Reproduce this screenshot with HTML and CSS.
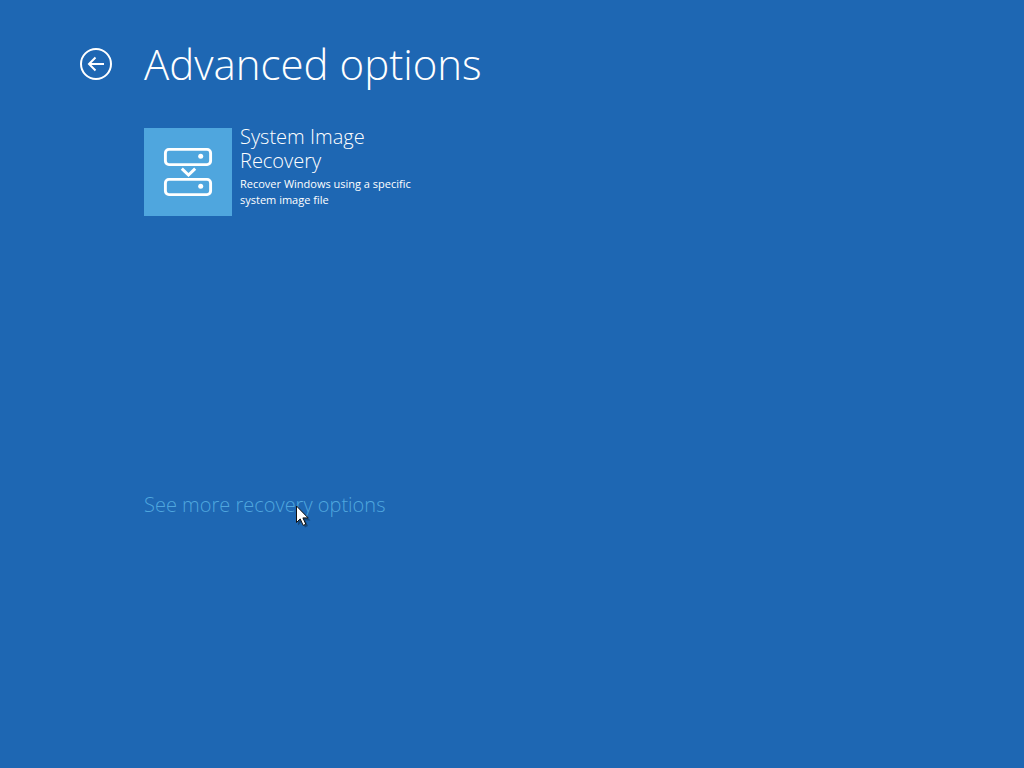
FILE: index.html
```html
<!DOCTYPE html>
<html lang="en">

<head>
    <meta charset="UTF-8">
    <meta name="viewport" content="width=device-width, initial-scale=1.0">
    <title>Advanced options</title>
    <link rel="stylesheet" href="styles.css">
</head>

<body>
    <header class="header">
        <button class="back" type="button" aria-label="Back">
            <svg viewBox="0 0 32 32" width="32" height="32" fill="none" stroke="currentColor" stroke-width="2">
                <circle cx="16" cy="16" r="15" />
                <path d="M24 16H9M15.500 9.500L9 16l6.500 6.500" />
            </svg>
        </button>
        <h1 class="title">Advanced options</h1>
    </header>

    <main class="content">
        <div class="options">
            <button class="option" type="button">
                <span class="option-icon">
                    <svg viewBox="0 0 88 88" width="88" height="88" fill="none" stroke="currentColor">
                        <rect x="21.400" y="21.400" width="45.200" height="15.200" rx="3.500" stroke-width="2.900" />
                        <rect x="21.400" y="51.400" width="45.200" height="15.200" rx="3.500" stroke-width="2.900" />
                        <circle cx="56.700" cy="28.300" r="2.500" fill="currentColor" stroke="none" />
                        <circle cx="56.700" cy="58.300" r="2.500" fill="currentColor" stroke="none" />
                        <path d="M37.800 40.600L44.500 47l6.700-6.400" stroke-width="3" />
                    </svg>
                </span>
                <span class="option-text">
                    <span class="option-name">System Image Recovery</span>
                    <span class="option-desc">Recover Windows using a specific system image file</span>
                </span>
            </button>
        </div>

        <div class="more">
            <a class="more-link" href="#">See more recovery options</a>
            <!-- mouse pointer -->
            <svg class="pointer" viewBox="0 0 14 22" width="14" height="22">
                <path d="M2 2.500v18l4-4 3 6 3-1.500-2.500-5.500h5z" fill="#000" opacity=".3" />
                <path d="M.5 1v16.500l3.700-3.600 3 6.500 2.600-1.200-2.900-6.300h5.200z" fill="#fff" stroke="#111" />
            </svg>
        </div>
    </main>
</body>

</html>
```

FILE: styles.css
```css
* {
    box-sizing: border-box;
}

body {
    margin: 0;
    min-height: 100vh;
    padding: 32px 80px;
    background-color: #1e67b3;
    color: #fff;
    font-family: "Open Sans", "Noto Sans", sans-serif;
}

button {
    padding: 0;
    border: 0;
    background: none;
    color: inherit;
    font-family: inherit;
    text-align: left;
    cursor: pointer;
}

.header {
    display: flex;
    align-items: center;
    gap: 32px;
    height: 64px;
}

.back {
    width: 32px;
    height: 32px;
}

.back svg,
.option-icon svg {
    display: block;
}

.title {
    margin: 0;
    font-size: 42px;
    font-weight: 300;
    line-height: 64px;
}

.content {
    padding: 32px 0 0 64px;
}

.options {
    display: flex;
    flex-wrap: wrap;
    align-items: flex-start;
    min-height: 365px;
}

.option {
    display: flex;
    gap: 8px;
    width: 280px;
}

.option-icon {
    flex: none;
    background-color: #4fa6de;
}

.option-text {
    display: flex;
    flex-direction: column;
    gap: 3px;
}

.option-name {
    margin-top: -3px;
    font-size: 20px;
    font-weight: 300;
    line-height: 24px;
}

.option-desc {
    font-size: 11px;
    line-height: 16px;
}

.more {
    position: relative;
    width: fit-content;
}

.more-link {
    color: #4fa6de;
    font-size: 20px;
    font-weight: 300;
    line-height: 24px;
    text-decoration: none;
}

.pointer {
    position: absolute;
    top: 12px;
    left: 152px;
    overflow: visible;
}
```
